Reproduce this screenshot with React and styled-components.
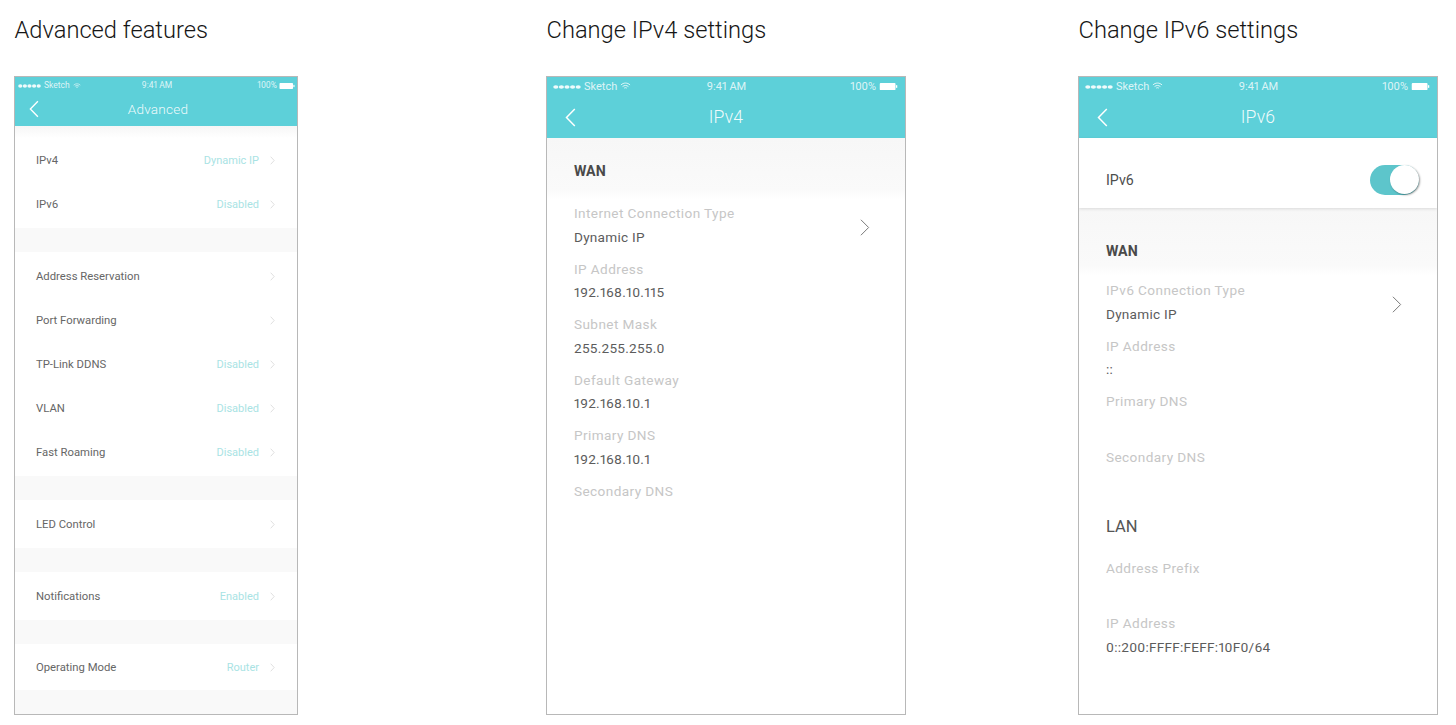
import React from "react";
import styled, { createGlobalStyle } from "styled-components";

const Global = createGlobalStyle`
  html, body { margin: 0; padding: 0; background: #fff; }
  body { font-family: Roboto, "Liberation Sans", sans-serif; overflow: hidden; }
`;

const Page = styled.div`
  display: grid;
  grid-template-columns: 532px 532px 360px;
  padding: 15px 0 0 14px;
  width: 1456px;
  height: 725px;
  box-sizing: border-box;
`;
const Column = styled.section`
  display: flex;
  flex-direction: column;
`;
const Title = styled.h2`
  margin: 0 0 31px 0.5px;
  height: 30px;
  font: 300 23.7px/30px Roboto, "Liberation Sans", sans-serif;
  color: #161616;
  white-space: nowrap;
`;
const Phone = styled.div`
  box-sizing: border-box;
  width: ${(p) => p.$w}px;
  height: 639px;
  border: 1px solid #b8b8b8;
  display: flex;
  flex-direction: column;
  overflow: hidden;
  background: #fff;
`;
const Header = styled.header`
  flex: none;
  height: ${(p) => (p.$small ? 49 : 61)}px;
  background: #5dd0d9;
  color: #fff;
  display: flex;
  flex-direction: column;
`;
const Status = styled.div`
  height: ${(p) => (p.$small ? 17 : 19)}px;
  padding: ${(p) => (p.$small ? "0 1px 0 3px" : "0 5px 0 6px")};
  display: grid;
  grid-template-columns: 1fr auto 1fr;
  align-items: center;
  font: 400 ${(p) => (p.$small ? 8.5 : 11)}px/1 Roboto, sans-serif;
  font-variant-numeric: proportional-nums;
  color: rgba(255, 255, 255, 0.8);
`;
const StatusLeft = styled.div`
  display: flex;
  align-items: center;
  gap: 3px;
`;
const StatusRight = styled.div`
  display: flex;
  align-items: center;
  justify-content: flex-end;
  gap: 1px;
`;
const Nav = styled.div`
  flex: 1;
  position: relative;
  display: flex;
  align-items: center;
  justify-content: center;
  padding: ${(p) => (p.$small ? "0 0 0 4px" : "2px 0 0")};
  font: 300 ${(p) => (p.$small ? 13.6 : 17.6)}px/1 Roboto, sans-serif;
  letter-spacing: 0.2px;
  color: rgba(255, 255, 255, 0.92);
`;
const BackIcon = styled.svg`
  position: absolute;
  left: ${(p) => (p.$small ? 14 : 18)}px;
  top: ${(p) => (p.$small ? 6 : 12)}px;
`;
const Body = styled.div`
  flex: 1;
  display: flex;
  flex-direction: column;
  min-height: 0;
`;
const Gap = styled.div`
  flex: none;
  height: ${(p) => p.$h}px;
  background: ${(p) => (p.$fade ? "linear-gradient(#f6f6f6, #fff)" : "#f9f9f9")};
`;
const Spacer = styled.div`
  flex: none;
  height: ${(p) => p.$h}px;
`;
const Group = styled.div`
  flex: none;
  background: #fff;
  padding: ${(p) => p.$pad || "2px 0"};
`;
const MenuRow = styled.div`
  height: 44px;
  box-sizing: border-box;
  padding: 1px 22px 0 21px;
  display: flex;
  align-items: center;
  font: 400 11.3px/1 Roboto, sans-serif;
  font-variant-numeric: proportional-nums;
  color: #666;
`;
const MenuLabel = styled.span`
  flex: 1;
`;
const MenuValue = styled.span`
  font-size: 11px;
  color: #a9e3e4;
  margin-right: 11px;
`;
const Band = styled.div`
  flex: none;
  height: ${(p) => p.$h}px;
  box-sizing: border-box;
  padding: ${(p) => p.$pt}px 27px 0;
  background: linear-gradient(#f7f7f7, #fafafa 85%, #fff);
  font: 700 14.2px/20px Roboto, sans-serif;
  color: #4a4a4a;
`;
const ToggleRow = styled.div`
  flex: none;
  height: 70px;
  box-sizing: border-box;
  padding: 14px 18px 0 27px;
  display: flex;
  align-items: center;
  justify-content: space-between;
  background: #fff;
  box-shadow: 0 1px 3px rgba(0, 0, 0, 0.12);
  position: relative;
  font: 400 14.2px/1 Roboto, sans-serif;
  color: #4d4d4d;
`;
const Toggle = styled.div`
  width: 49px;
  height: 30px;
  border-radius: 15px;
  background: #5dc5cb;
  position: relative;
`;
const Knob = styled.span`
  position: absolute;
  right: 0;
  top: 0;
  box-sizing: border-box;
  width: 29px;
  height: 29px;
  border-radius: 50%;
  background: #fff;
  box-shadow: 1px 1px 2px rgba(0, 0, 0, 0.4);
`;
const Field = styled.div`
  position: relative;
  flex: none;
  height: ${(p) => p.$h || 55.6}px;
  padding: 0 27px;
  font: 400 13.6px/23.5px Roboto, sans-serif;
  font-variant-numeric: proportional-nums;
`;
const FieldLabel = styled.div`
  color: #c6c6c6;
  letter-spacing: 0.4px;
`;
const FieldValue = styled.div`
  color: #5c5c5c;
  min-height: 23px;
  letter-spacing: 0.25px;
`;
const FieldChevron = styled.svg`
  position: absolute;
  right: 35px;
  top: 15.5px;
`;
const SectionLan = styled.div`
  flex: none;
  padding: 0 27px;
  height: 42px;
  font: 400 16.5px/24px Roboto, sans-serif;
  color: #555;
`;

const Chevron = () => (
  <svg width="5" height="9" viewBox="0 0 5 9" fill="none" stroke="#dcdcdc" strokeWidth="0.9">
    <path d="M0.7 0.7 L4.2 4.5 L0.7 8.3" />
  </svg>
);

const Back = ({ small }) => (
  <BackIcon $small={small} width={small ? 10 : 11} height={small ? 18 : 19} viewBox="0 0 11 19" fill="none" stroke="#fff" strokeWidth="1.5">
    <path d="M9.8 1 L1.5 9.5 L9.8 18" />
  </BackIcon>
);

const Wifi = ({ s }) => (
  <svg width={s} height={s * 0.75} viewBox="0 0 12 9" fill="none" stroke="rgba(255,255,255,.85)" strokeWidth="1">
    <path d="M1 3.2 C4 .5 8 .5 11 3.2 M2.8 5 C4.8 3.4 7.2 3.4 9.2 5 M4.5 6.8 C5.4 6 6.6 6 7.5 6.8" />
  </svg>
);

const Battery = ({ w, h }) => (
  <svg width={w} height={h} viewBox="0 0 20 8">
    <rect x="0" y="0" width="18" height="8" rx="1" fill="#fff" />
    <rect x="18.5" y="2.5" width="1.5" height="3" fill="#fff" />
  </svg>
);

const Dots = ({ small }) => {
  const w = small ? 23 : 28;
  return (
    <svg width={w} height={4} viewBox="0 0 25 4" preserveAspectRatio="none" fill="rgba(255,255,255,.9)">
      {[2.5, 7.5, 12.5, 17.5, 22.5].map((x) => (
        <ellipse key={x} cx={x} cy="2" rx="2.3" ry="1.8" />
      ))}
    </svg>
  );
};

const Head = ({ title, small }) => (
  <Header $small={small}>
    <Status $small={small}>
      <StatusLeft>
        <Dots small={small} />
        <span>Sketch</span>
        <Wifi s={small ? 8 : 11} />
      </StatusLeft>
      <span>9:41 AM</span>
      <StatusRight>
        <span>100%</span>
        <Battery w={small ? 18 : 23} h={small ? 6 : 7} />
      </StatusRight>
    </Status>
    <Nav $small={small}>
      <Back small={small} />
      {title}
    </Nav>
  </Header>
);

const Menu = ({ label, value }) => (
  <MenuRow>
    <MenuLabel>{label}</MenuLabel>
    {value && <MenuValue>{value}</MenuValue>}
    <Chevron />
  </MenuRow>
);

const Info = ({ label, value, arrow, h }) => (
  <Field $h={h}>
    <FieldLabel>{label}</FieldLabel>
    <FieldValue>{value}</FieldValue>
    {arrow && (
      <FieldChevron width="10" height="19" viewBox="0 0 11 19" fill="none" stroke="#7a7a7a" strokeWidth="1.1">
        <path d="M1 1 L9.5 9.5 L1 18" />
      </FieldChevron>
    )}
  </Field>
);

export default function App() {
  return (
    <Page>
      <Global />
      <Column>
        <Title>Advanced features</Title>
        <Phone $w={284}>
          <Head title="Advanced" small />
          <Body>
            <Gap $h={12} $fade />
            <Group $pad="0 0 2px">
              <Menu label="IPv4" value="Dynamic IP" />
              <Menu label="IPv6" value="Disabled" />
            </Group>
            <Gap $h={24} />
            <Group>
              <Menu label="Address Reservation" />
              <Menu label="Port Forwarding" />
              <Menu label="TP-Link DDNS" value="Disabled" />
              <Menu label="VLAN" value="Disabled" />
              <Menu label="Fast Roaming" value="Disabled" />
            </Group>
            <Gap $h={24} />
            <Group>
              <Menu label="LED Control" />
            </Group>
            <Gap $h={24} />
            <Group>
              <Menu label="Notifications" value="Enabled" />
            </Group>
            <Gap $h={24} />
            <Group $pad="1px 0">
              <Menu label="Operating Mode" value="Router" />
            </Group>
            <Gap $h={30} />
          </Body>
        </Phone>
      </Column>
      <Column>
        <Title>Change IPv4 settings</Title>
        <Phone $w={360}>
          <Head title="IPv4" />
          <Body>
            <Band $h={61} $pt={23}>WAN</Band>
            <Spacer $h={3} />
            <Info label="Internet Connection Type" value="Dynamic IP" arrow />
            <Info label="IP Address" value="192.168.10.115" />
            <Info label="Subnet Mask" value="255.255.255.0" />
            <Info label="Default Gateway" value="192.168.10.1" />
            <Info label="Primary DNS" value="192.168.10.1" />
            <Info label="Secondary DNS" />
          </Body>
        </Phone>
      </Column>
      <Column>
        <Title>Change IPv6 settings</Title>
        <Phone $w={360}>
          <Head title="IPv6" />
          <Body>
            <ToggleRow>
              IPv6
              <Toggle>
                <Knob />
              </Toggle>
            </ToggleRow>
            <Band $h={67} $pt={33}>WAN</Band>
            <Spacer $h={4} />
            <Info label="IPv6 Connection Type" value="Dynamic IP" arrow />
            <Info label="IP Address" value="::" />
            <Info label="Primary DNS" />
            <Info label="Secondary DNS" h={69} />
            <SectionLan>LAN</SectionLan>
            <Info label="Address Prefix" />
            <Info label="IP Address" value="0::200:FFFF:FEFF:10F0/64" />
          </Body>
        </Phone>
      </Column>
    </Page>
  );
}
